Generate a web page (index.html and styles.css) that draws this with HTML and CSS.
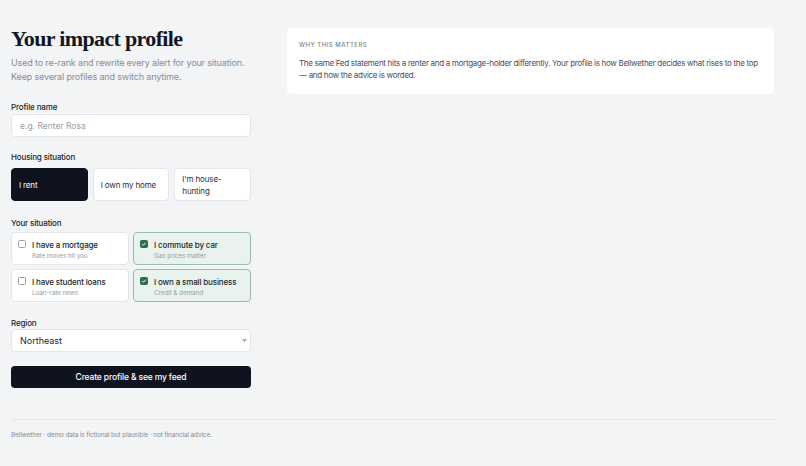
FILE: index.html
```html
<!DOCTYPE html>
<html lang="en">
<head>
    <meta charset="UTF-8">
    <meta name="viewport" content="width=device-width, initial-scale=1.0">
    <link rel="stylesheet" href="styles.css">
    <title>Your impact profile - Bellwether</title>
</head>
<body>
    <main class="page">
        <section class="profile-form">
            <h1>Your impact profile</h1>
            <p class="lede">Used to re-rank and rewrite every alert for your situation.<br>Keep several profiles and switch anytime.</p>

            <form action="javascript:void(0)">
                <label class="field-label" for="profile-name">Profile name</label>
                <input class="text-input" type="text" id="profile-name" placeholder="e.g. Renter Rosa">

                <p class="group-label">Housing situation</p>
                <div class="housing">
                    <button type="button" class="choice selected">I rent</button>
                    <button type="button" class="choice">I own my home</button>
                    <button type="button" class="choice">I'm house-<br>hunting</button>
                </div>

                <p class="group-label situation-label">Your situation</p>
                <div class="situations">
                    <div class="situation">
                        <span class="box"></span>
                        <span class="situation-text">
                            <span class="situation-title">I have a mortgage</span>
                            <span class="situation-sub">Rate moves hit you</span>
                        </span>
                    </div>
                    <div class="situation checked">
                        <span class="box">
                            <svg viewBox="0 0 8 8" width="6" height="6"><path d="M1.6 4.1 3.2 5.7 6.4 2.3" fill="none" stroke="#fff" stroke-width="1.3"/></svg>
                        </span>
                        <span class="situation-text">
                            <span class="situation-title">I commute by car</span>
                            <span class="situation-sub">Gas prices matter</span>
                        </span>
                    </div>
                    <div class="situation">
                        <span class="box"></span>
                        <span class="situation-text">
                            <span class="situation-title">I have student loans</span>
                            <span class="situation-sub">Loan-rate news</span>
                        </span>
                    </div>
                    <div class="situation checked">
                        <span class="box">
                            <svg viewBox="0 0 8 8" width="6" height="6"><path d="M1.6 4.1 3.2 5.7 6.4 2.3" fill="none" stroke="#fff" stroke-width="1.3"/></svg>
                        </span>
                        <span class="situation-text">
                            <span class="situation-title">I own a small business</span>
                            <span class="situation-sub">Credit &amp; demand</span>
                        </span>
                    </div>
                </div>

                <label class="group-label region-label" for="region">Region</label>
                <div class="select-wrap">
                    <select id="region" class="select">
                        <option>Northeast</option>
                        <option>Midwest</option>
                        <option>South</option>
                        <option>West</option>
                    </select>
                </div>

                <button type="submit" class="submit">Create profile &amp; see my feed</button>
            </form>
        </section>

        <aside class="why-card">
            <p class="eyebrow">WHY THIS MATTERS</p>
            <p class="why-text">The same Fed statement hits a renter and a mortgage-holder differently. Your profile is how Bellwether decides what rises to the top — and how the advice is worded.</p>
        </aside>
    </main>

    <footer class="footer">
        <p>Bellwether · demo data is fictional but plausible · not financial advice.</p>
    </footer>
</body>
</html>
```

FILE: styles.css
```css
body {
    font-family: 'Inter', 'Noto Sans', sans-serif;
    background-color: #f3f4f6;
    color: #151a26;
    margin: 0;
    padding: 0 30px 0 11px;
    letter-spacing: -0.15px;
}

.page {
    display: grid;
    grid-template-columns: 240px 487px;
    column-gap: 36px;
    align-items: start;
    padding-top: 28px;
}

h1 {
    font-family: 'Liberation Serif', 'DejaVu Serif', serif;
    font-size: 22px;
    font-weight: bold;
    letter-spacing: -0.65px;
    margin: 0;
    line-height: 22px;
    color: #121624;
}

.lede {
    font-size: 9px;
    line-height: 14px;
    color: #878c96;
    margin: 6px 0 17px;
}

form {
    display: flex;
    flex-direction: column;
}

.field-label,
.group-label {
    display: block;
    font-size: 8px;
    font-weight: 500;
    color: #1b1f2a;
    line-height: 12px;
}

.field-label {
    margin: 0 0 1px;
}

.group-label {
    margin: 14px 0 5px;
}

.situation-label {
    margin: 16px 0 3px;
}

.region-label {
    margin: 16px 0 0;
    line-height: 10px;
}

.text-input,
.select {
    box-sizing: border-box;
    width: 100%;
    height: 23px;
    border: 1px solid #e3e5ea;
    border-radius: 4px;
    background: #fff;
    font-family: inherit;
    padding: 0 8px;
    margin: 0;
}

.text-input {
    font-size: 8.5px;
}

.text-input::placeholder {
    color: #9a9ea7;
}

.housing {
    display: grid;
    grid-template-columns: repeat(3, 1fr);
    gap: 5px;
}

.choice {
    height: 33px;
    text-align: left;
    padding: 0 7px;
    background: #fff;
    border: 1px solid #e3e5ea;
    border-radius: 4px;
    font-family: inherit;
    font-size: 8px;
    letter-spacing: -0.15px;
    line-height: 12px;
    color: #2a2f3a;
    cursor: pointer;
}

.choice.selected {
    background: #0f1320;
    border-color: #0f1320;
    color: #fff;
}

.situations {
    display: grid;
    grid-template-columns: 1fr 1fr;
    gap: 4px;
}

.situation {
    display: flex;
    gap: 6px;
    align-items: flex-start;
    height: 33px;
    box-sizing: border-box;
    padding: 6px 6px 0;
    background: #fff;
    border: 1px solid #e3e5ea;
    border-radius: 4px;
    cursor: pointer;
}

.situation.checked {
    background: #e9f3ed;
    border-color: #9cbcaa;
}

.box {
    box-sizing: border-box;
    display: flex;
    align-items: center;
    justify-content: center;
    width: 8px;
    height: 8px;
    margin-top: 1px;
    border: 1px solid #9a9fa8;
    border-radius: 1.5px;
    background: #fff;
    flex-shrink: 0;
}

.situation.checked .box {
    background: #2f6b4e;
    border-color: #2f6b4e;
}

.box svg {
    display: block;
}

.situation-text {
    display: flex;
    flex-direction: column;
    padding-top: 1px;
}

.situation-title {
    font-size: 8px;
    font-weight: 500;
    line-height: 11px;
    color: #1b1f2a;
}

.situation-sub {
    font-size: 6.5px;
    line-height: 11px;
    color: #9a9ea7;
}

.select {
    font-size: 9px;
    color: #1b1f2a;
    padding-left: 8px;
    appearance: none;
    background: #fff;
}

.select-wrap {
    position: relative;
}

.select-wrap::after {
    content: "";
    position: absolute;
    right: 5px;
    top: 10px;
    width: 2px;
    height: 2px;
    border-right: 1px solid #777;
    border-bottom: 1px solid #777;
    transform: rotate(45deg);
}

.submit {
    margin-top: 14px;
    height: 22px;
    background: #0f1320;
    color: #fff;
    border: none;
    border-radius: 4px;
    font-family: inherit;
    font-size: 8.5px;
    font-weight: 500;
    letter-spacing: -0.15px;
    cursor: pointer;
}

.why-card {
    background: #fff;
    border-radius: 5px;
    padding: 13px 12px 13px;
}

.eyebrow {
    font-size: 6px;
    letter-spacing: 0.5px;
    color: #7d818b;
    margin: 0 0 8px;
    font-weight: 500;
    line-height: 8px;
}

.why-text {
    font-size: 8px;
    line-height: 12px;
    color: #4a4f5c;
    margin: 0;
    letter-spacing: -0.3px;
}

.footer {
    margin-top: 31px;
    border-top: 1px solid #e4e6ea;
}

.footer p {
    margin: 11px 0;
    font-size: 6.5px;
    line-height: 9px;
    color: #8a8e97;
}
```
